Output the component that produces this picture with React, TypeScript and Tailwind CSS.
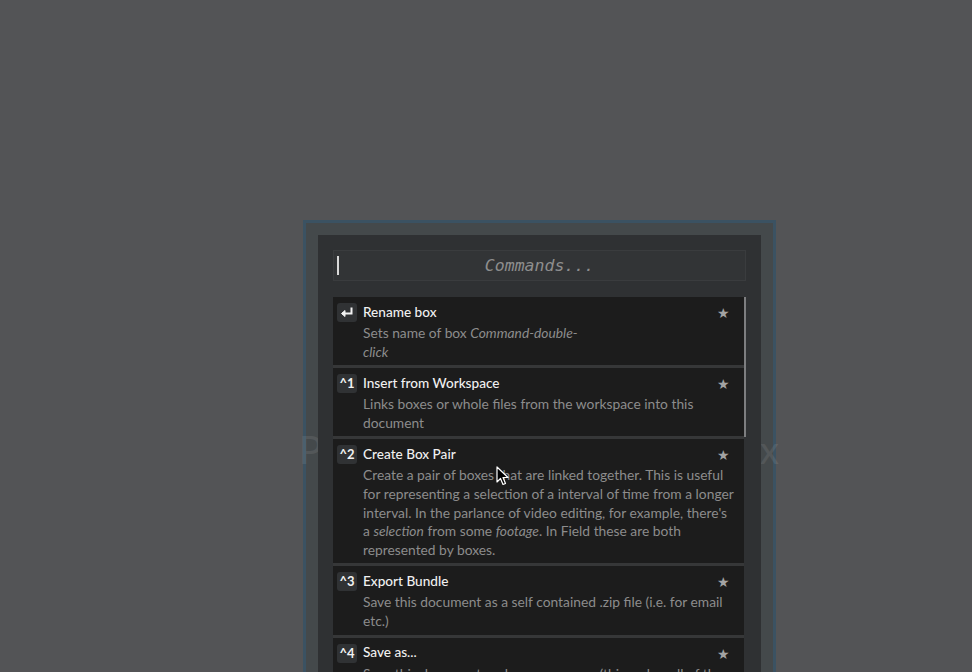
import React from "react";

type Item = {
  key: React.ReactNode;
  title: string;
  desc: React.ReactNode[];
};

const EnterIcon = () => (
  <svg width="14" height="12" viewBox="0 0 14 12" fill="none">
    <path d="M11.5 1.5V6.5H3" stroke="#f2f2f2" strokeWidth="2" strokeLinecap="square" />
    <path d="M1.5 6.5L5 3.5V9.5Z" fill="#f2f2f2" stroke="#f2f2f2" strokeWidth="1" strokeLinejoin="round" />
  </svg>
);

const items: Item[] = [
  {
    key: <EnterIcon />,
    title: "Rename box",
    desc: [
      <>Sets name of box <i>Command-double-</i></>,
      <i>click</i>,
    ],
  },
  {
    key: "^1",
    title: "Insert from Workspace",
    desc: ["Links boxes or whole files from the workspace into this", "document"],
  },
  {
    key: "^2",
    title: "Create Box Pair",
    desc: [
      "Create a pair of boxes that are linked together. This is useful",
      "for representing a selection of a interval of time from a longer",
      "interval. In the parlance of video editing, for example, there's",
      <>a <i>selection</i> from some <i>footage</i>. In Field these are both</>,
      "represented by boxes.",
    ],
  },
  {
    key: "^3",
    title: "Export Bundle",
    desc: ["Save this document as a self contained .zip file (i.e. for email", "etc.)"],
  },
  {
    key: "^4",
    title: "Save as...",
    desc: ["Save this document under a new name (this makes all of the", "boxes in it refer to the new document)"],
  },
];

function Row({ item }: { item: Item }) {
  return (
    <div className="flex bg-[#1c1c1c] pl-[4px] pr-[14px] pt-[5px] pb-[4px]">
      <div className="w-[20px] h-[19px] mt-[1px] rounded-[3px] bg-[#303234] flex items-center justify-center text-[13px] font-bold text-[#f2f2f2] leading-none shrink-0">
        {item.key}
      </div>
      <div className="ml-[6px] flex-1 min-w-0">
        <div className="flex items-center justify-between h-[20px]">
          <span className="text-[13.6px] font-medium text-[#f0f0f0]">{item.title}</span>
          <span className="text-[14px] mt-[1px] text-[#a3a3a3]">★</span>
        </div>
        <div className="mt-[2px] text-[13.8px] leading-[18.6px] text-[#8c8c8c]">
          {item.desc.map((d, i) => (
            <div key={i} className="whitespace-nowrap">{d}</div>
          ))}
        </div>
      </div>
    </div>
  );
}

export default function App() {
  return (
    <div
      className="relative h-[672px] w-[972px] overflow-hidden bg-[#535456] pt-[220px] pl-[303px]"
      style={{ fontFamily: "Lato, 'Noto Sans', sans-serif" }}
    >
      <div className="absolute z-10 left-[299px] top-[430px] w-[480px] flex justify-between text-[38px] text-white opacity-[0.08] leading-none">
        <span>Pr</span>
        <span>ox</span>
      </div>
      <div className="w-[473px] h-[460px] border-[3px] border-[#3b5262] bg-[#44494b] pt-[12px] px-[12px]">
        <div className="relative z-20 h-full bg-[#2f3133] pt-[15px] px-[15px]">
          <div className="relative h-[31px] border border-[#3a3c3e] bg-[#323436] flex items-center justify-center">
            <div className="absolute left-[3px] top-[5px] w-[2px] h-[19px] bg-[#d8d8d8]" />
            <span
              className="italic text-[16.5px] mt-[2px] text-[#8e8e8e]"
              style={{ fontFamily: "'DejaVu Sans Mono', monospace" }}
            >
              Commands...
            </span>
          </div>
          <div className="mt-[16px] flex">
            <div className="flex-1 min-w-0 overflow-hidden flex flex-col gap-[3px] bg-[#363738]">
              {items.map((it, i) => (
                <Row key={i} item={it} />
              ))}
            </div>
            <div className="w-[2px] h-[140px] shrink-0 bg-[#7d7e80]" />
          </div>
        </div>
      </div>
      <svg
        className="absolute z-30 left-[496px] top-[466px]"
        width="13"
        height="20"
        viewBox="0 0 13 20"
      >
        <path d="M1 1V16L4.5 12.5L7 18.5L9.5 17.5L7 11.5H12Z" fill="#000" stroke="#fff" strokeWidth="1.2" strokeLinejoin="round" />
      </svg>
    </div>
  );
}
